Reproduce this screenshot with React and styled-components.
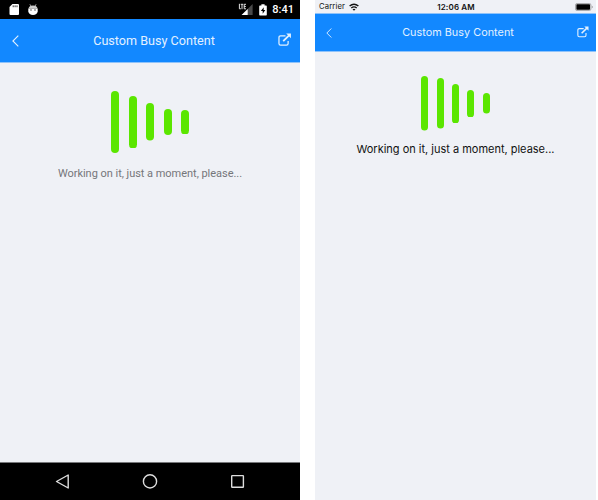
import React from "react";
import styled, { createGlobalStyle } from "styled-components";

const GlobalStyle = createGlobalStyle`
  html, body { margin: 0; background: #fff; }
`;

const Stage = styled.main`
  display: flex;
  gap: 15px;
  width: 598px;
  height: 500px;
  overflow: hidden;
`;

const Phone = styled.section`
  display: flex;
  flex-direction: column;
  width: ${(p) => p.$width}px;
  height: 500px;
  background: #eff1f6;
  font-family: ${(p) => p.$font}, sans-serif;
`;

const AndroidStatus = styled.div`
  display: flex;
  align-items: center;
  flex: none;
  box-sizing: border-box;
  height: 19px;
  padding: 0 6px 0 9px;
  background: #000;
  color: #fff;
`;

const IosStatus = styled.div`
  display: grid;
  grid-template-columns: 1fr auto 1fr;
  align-items: center;
  flex: none;
  box-sizing: border-box;
  height: 13px;
  padding: 1px 3px 0 4px;
  color: #111;
`;

const StatusSide = styled.div`
  display: flex;
  align-items: center;
  justify-content: ${(p) => (p.$end ? "flex-end" : "flex-start")};
  gap: 4px;
`;

const Label = styled.span`
  font-size: ${(p) => p.$size}px;
  font-weight: ${(p) => p.$weight || 400};
  line-height: 12px;
  letter-spacing: ${(p) => p.$spacing || 0}px;
  white-space: nowrap;
`;

const Glyph = styled.svg`
  display: block;
  flex: none;
  margin-left: ${(p) => p.$left || 0}px;
  margin-top: ${(p) => p.$top || 0}px;
`;

const Spacer = styled.div`
  flex: 1;
`;

const Header = styled.header`
  display: grid;
  grid-template-columns: ${(p) => p.$lead}px 1fr 30px;
  align-items: center;
  flex: none;
  box-sizing: border-box;
  height: ${(p) => p.$height}px;
  border-top: ${(p) => (p.$topLine ? "1px solid #8fc3fa" : "0")};
  border-bottom: 1px solid #8fc3fa;
  background: #1288ff;
  background-clip: padding-box;
  color: #e3f1ff;
`;

const Title = styled.h1`
  margin: 0;
  text-align: center;
  font-size: ${(p) => p.$size}px;
  font-weight: 400;
  line-height: 16px;
  letter-spacing: ${(p) => p.$spacing}px;
  white-space: nowrap;
`;

const Content = styled.div`
  display: flex;
  flex-direction: column;
  align-items: center;
  flex: 1;
  padding-top: ${(p) => p.$top}px;
`;

const Bars = styled.div`
  display: flex;
  align-items: center;
  gap: ${(p) => p.$gap}px;
  height: ${(p) => p.$height}px;
`;

const Bar = styled.svg`
  display: block;
  fill: #5be600;
`;

const Message = styled.p`
  margin: ${(p) => p.$top}px 0 0;
  font-size: ${(p) => p.$size}px;
  line-height: 16px;
  letter-spacing: ${(p) => p.$spacing}px;
  color: ${(p) => p.$color};
  white-space: nowrap;
`;

const AndroidNav = styled.nav`
  display: flex;
  flex: none;
  box-sizing: border-box;
  height: 38px;
  padding-left: 55px;
  border-top: 1px solid #77787b;
  background: #000;
`;

function BusyBars({ heights, width, gap }) {
  return (
    <Bars $gap={gap} $height={heights[0]}>
      {heights.map((h, i) => (
        <Bar key={i} width={width} height={h}>
          <rect width={width} height={h} rx={width / 2} />
        </Bar>
      ))}
    </Bars>
  );
}

function Back({ w, h, left, top }) {
  return (
    <Glyph $left={left} $top={top} width={w} height={h} viewBox="0 0 7 12" fill="none" stroke="#e3f1ff" strokeWidth="1.1">
      <path d="M6.3.6.9 6l5.4 5.4" />
    </Glyph>
  );
}

function OpenLink({ size, left, top }) {
  return (
    <Glyph $left={left} $top={top} width={size} height={size} viewBox="0 0 14 14" fill="none" stroke="#e3f1ff">
      <path d="M7.8 3H2.7Q1 3 1 4.7v6.1q0 1.7 1.7 1.7h6.1q1.7 0 1.7-1.7V8.3" strokeWidth="1.3" />
      <path d="M5.4 8.5 11.5 2.4" strokeWidth="1.9" />
      <path d="M8.5.6h4.9v4.9z" fill="#e3f1ff" stroke="none" />
    </Glyph>
  );
}

export default function App() {
  return (
    <>
      <GlobalStyle />
      <Stage>
        <Phone $width={300} $font="Roboto">
          <AndroidStatus>
            <Glyph width="10" height="11" viewBox="0 0 10 11">
              <path d="M3.4 0H9q1 0 1 1v9q0 1-1 1H1.5Q.5 11 .5 10V3z" fill="#fff" />
              <path d="M4.2 1.4v1.8M6.1 1.4v1.8M8 1.4v1.8" stroke="#222" strokeWidth=".9" />
            </Glyph>
            <Glyph $left={9} $top={-1} width="10" height="11" viewBox="0 0 10 11">
              <path d="M1.9.3 3 2M8.1.3 7 2" stroke="#bbb" strokeWidth=".9" />
              <path d="M.5 4.6Q1 1.5 5 1.5t4.5 3.1z" fill="#ccc" />
              <path d="M.3 4.6h9.4v3Q9 11 5 11T.3 7.6z" fill="#fff" />
              <circle cx="3" cy="6" r=".65" fill="#222" />
              <circle cx="7" cy="6" r=".65" fill="#222" />
            </Glyph>
            <Spacer />
            <Glyph width="15" height="13" viewBox="0 0 15 13">
              <path d="M14.6 1V12H3.6z" fill="#4a4a4a" />
              <path d="M9.7 5.9V12H3.6z" fill="#fff" />
              <path d="M1.4.8v5h1.5M2.7 1.3h2.6M4 1.3V6.2M8 1.3H6.2v4.5H8M6.2 3.5h1.6" fill="none" stroke="#eee" strokeWidth=".95" />
            </Glyph>
            <Glyph $left={6} width="8" height="12" viewBox="0 0 8 12">
              <path d="M2.4.3h3.2v1.2h1.5q.7 0 .7.7v8.6q0 .7-.7.7H.9q-.7 0-.7-.7V2.2q0-.7.7-.7h1.5z" fill="#fff" />
              <path d="M4.8 3.2 1.8 7h1.9v2.8L6.3 6H4.6z" fill="#000" />
            </Glyph>
            <Glyph width="5" height="1" />
            <Label $size={11} $weight={500}>8:41</Label>
          </AndroidStatus>
          <Header $height={44} $lead={38}>
            <Back w={7} h={12} left={12} />
            <Title $size={12.6} $spacing={0}>Custom Busy Content</Title>
            <OpenLink size={13.5} left={7.7} top={-1} />
          </Header>
          <Content $top={28}>
            <BusyBars heights={[62, 52.5, 37.5, 26, 24.5]} width={8} gap={9.5} />
            <Message $top={13} $size={11} $spacing={-0.03} $color="#75767a">
              Working on it, just a moment, please...
            </Message>
          </Content>
          <AndroidNav>
            <Glyph $left={0} $top={10} width="16" height="17" viewBox="0 0 16 17" fill="none" stroke="#ddd" strokeWidth="1.4">
              <path d="M13.2 2v13L1.5 8.5z" strokeLinejoin="round" />
            </Glyph>
            <Glyph $left={71} $top={10} width="16" height="17" viewBox="0 0 16 17" fill="none" stroke="#ddd" strokeWidth="1.4">
              <circle cx="8" cy="8.4" r="6.6" />
            </Glyph>
            <Glyph $left={72} $top={10} width="16" height="17" viewBox="0 0 16 17" fill="none" stroke="#ddd" strokeWidth="1.4">
              <rect x="1.7" y="2.6" width="11.7" height="11.7" rx=".5" />
            </Glyph>
          </AndroidNav>
        </Phone>
        <Phone $width={281} $font="Inter">
          <IosStatus>
            <StatusSide>
              <Label $size={7.7} $spacing={0.12}>Carrier</Label>
              <Glyph width="10" height="8" viewBox="0 0 10 8" fill="none" stroke="#111" strokeWidth="1.4">
                <path d="M.6 3.1Q5-.8 9.4 3.1M2.3 5Q5 2.8 7.7 5" />
                <path d="M3.5 6.3 5 7.8l1.5-1.5Q5 5.2 3.5 6.3z" fill="#111" stroke="none" />
              </Glyph>
            </StatusSide>
            <Label $size={8} $weight={600} $spacing={0.15}>12:06 AM</Label>
            <StatusSide $end>
              <Glyph width="18" height="8" viewBox="0 0 18 8">
                <rect x=".5" y=".5" width="15.4" height="7" rx="1.5" fill="#ddd" stroke="#a5a6a9" strokeWidth=".9" />
                <rect x="1.4" y="1.3" width="13.6" height="5.4" rx=".7" fill="#000" />
                <path d="M16.8 2.8v2.4q1-.3 1-1.2t-1-1.2z" fill="#999" />
              </Glyph>
            </StatusSide>
          </IosStatus>
          <Header $height={39} $topLine $lead={35}>
            <Back w={6} h={10} left={10.5} />
            <Title $size={10.8} $spacing={0.04}>Custom Busy Content</Title>
            <OpenLink size={12} left={11} top={-1} />
          </Header>
          <Content $top={24}>
            <BusyBars heights={[54.5, 50.5, 39.5, 27.5, 20.5]} width={7} gap={8.4} />
            <Message $top={10} $size={11} $spacing={-0.01} $color="#111">
              Working on it, just a moment, please...
            </Message>
          </Content>
        </Phone>
      </Stage>
    </>
  );
}
